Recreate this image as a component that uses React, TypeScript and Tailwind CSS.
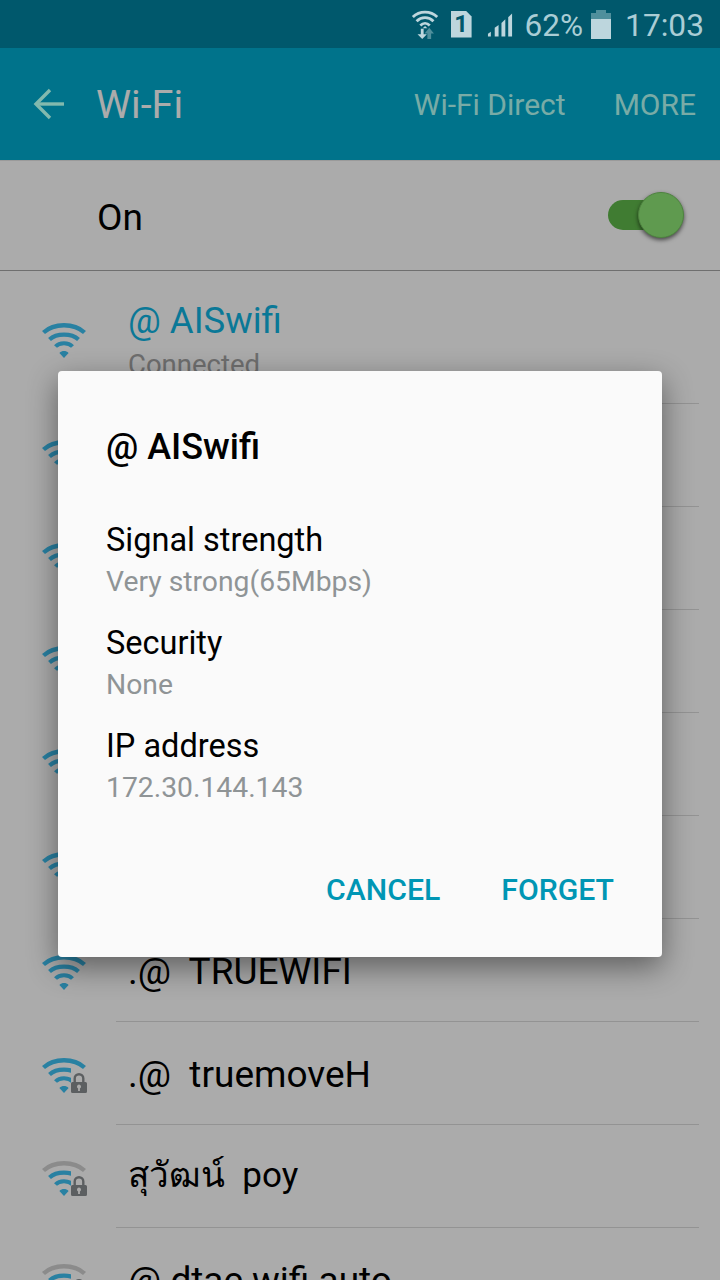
function WifiIcon({ weak, lock }: { weak?: boolean; lock?: boolean }) {
  const blue = '#3ec0f2';
  return (
    <svg width="48" height="38" viewBox="0 0 48 38" fill="none" className="shrink-0">
      <defs>
        <clipPath id="lock-cut">
          <rect x="0" y="0" width="31" height="38" />
        </clipPath>
      </defs>
      <path d="M3.5 12.5C14 2.8 34 2.8 44.5 12.5" stroke={weak ? '#d0d0d0' : blue} strokeWidth="4.4" />
      <g clipPath={lock ? 'url(#lock-cut)' : undefined}>
        <path d="M9.5 19.5C16.5 13 31.5 13 38.5 19.5" stroke={blue} strokeWidth="4.2" />
        <path d="M15.5 26.5C19.5 22.2 28.5 22.2 32.5 26.5" stroke={blue} strokeWidth="4" />
      </g>
      <path d="M24 38l-4.6-5c2.6-2.6 6.6-2.6 9.2 0L24 38Z" fill={blue} />
      {lock && (
        <path
          d="M33.5 27v-3.5a5.5 5.5 0 0 1 11 0V27h1a1.5 1.5 0 0 1 1.5 1.5v8a1.5 1.5 0 0 1-1.5 1.5h-13a1.5 1.5 0 0 1-1.5-1.5v-8a1.5 1.5 0 0 1 1.5-1.5h1Zm2.4 0h6.2v-3.5a3.1 3.1 0 0 0-6.2 0V27Zm3.1 2.6a2 2 0 0 0-.9 3.8V36h1.8v-2.6a2 2 0 0 0-.9-3.8Z"
          fill="#8a8e91"
          fillRule="evenodd"
        />
      )}
    </svg>
  );
}

function WifiRow({ name, weak, lock, thai }: { name?: string; weak?: boolean; lock?: boolean; thai?: boolean }) {
  return (
    <div className="h-[103px] shrink-0 flex items-center pl-[40px] pr-[21px]">
      <WifiIcon weak={weak} lock={lock} />
      <div className="ml-[40px] flex-1 self-stretch relative flex items-center">
        <span className={thai ? 'text-[35px] text-black whitespace-pre' : 'mt-[3px] text-[37px] text-black whitespace-pre'}>{name}</span>
        <div className="absolute -left-[12px] right-0 bottom-0 h-px bg-[#dcdcdc]" />
      </div>
    </div>
  );
}

function StatusIcons() {
  return (
    <div className="flex items-center">
      {/* wifi with up/down arrows */}
      <svg width="29" height="30" viewBox="0 0 30 32" fill="none">
        <path d="M1.5 8.5C8.5 1.5 20.5 1.5 27.5 8.5" stroke="#bdd6dd" strokeWidth="3" />
        <path d="M5.5 13C10.5 8 18.5 8 23.5 13" stroke="#bdd6dd" strokeWidth="3" />
        <path d="M9.5 17.5C12.5 14.5 16.5 14.5 19.5 17.5" stroke="#bdd6dd" strokeWidth="3" />
        <path d="M12 20.5h5l-2.5-2.5Z" fill="#bdd6dd" />
        <path d="M10 21v6H6.5l5 5 5-5H13v-6Z" fill="#bdd6dd" />
        <path d="M17 32v-6h-3l5-6 5 6h-3v6Z" fill="#4f8f9c" />
      </svg>
      {/* sim slot 1 */}
      <div className="ml-[11px] w-[21px] h-[27px] bg-[#bdd6dd] flex items-center justify-center [clip-path:polygon(0_0,72%_0,100%_22%,100%_100%,0_100%)]">
        <span className="text-[24px] leading-none font-bold text-[#00586c]">1</span>
      </div>
      {/* signal bars */}
      <svg width="27" height="26" viewBox="0 0 28 26" className="ml-[15px]">
        <path d="M1 26v-3l3-2v5Z" fill="#bdd6dd" />
        <path d="M8 26v-9l4-3v12Z" fill="#bdd6dd" />
        <path d="M15 26V12l4-4v18Z" fill="#bdd6dd" />
        <path d="M22 26V6l4-4v24Z" fill="#bdd6dd" />
      </svg>
    </div>
  );
}

function Info({ label, value }: { label: string; value: string }) {
  return (
    <div className="h-[103px]">
      <div className="text-[32.5px] leading-[42px] text-black">{label}</div>
      <div className="text-[28.3px] leading-[41px] text-[#8f9496]">{value}</div>
    </div>
  );
}

export default function App() {
  return (
    <div className="relative w-[720px] h-[1280px] overflow-hidden bg-white font-['Roboto',sans-serif]">
      {/* status bar */}
      <div className="h-[48px] bg-[#00586c] flex items-center justify-end pr-[16px] text-[#aacdd5]">
        <StatusIcons />
        <span className="ml-[11px] mt-[3px] text-[31.5px] leading-none">62%</span>
        <div className="ml-[8px] w-[20px] h-[29px] flex flex-col items-center">
          <div className="w-[10px] h-[3px] bg-[#4f8f9c]" />
          <div className="w-full h-[6px] bg-[#4f8f9c]" />
          <div className="w-full flex-1 bg-[#bdd6dd]" />
        </div>
        <span className="ml-[14px] mt-[3px] text-[31.7px] leading-none">17:03</span>
      </div>

      {/* app bar */}
      <div className="h-[112px] bg-[#00acd0] flex items-center">
        <svg width="32" height="32" viewBox="0 0 32 32" fill="none" className="ml-[33px] relative z-10" stroke="#82b9ae" strokeWidth="3.4">
          <path d="M31 16H3" />
          <path d="M17 2 3 16l14 14" />
        </svg>
        <span className="ml-[31px] text-[39.5px] text-white relative top-[1px]">Wi-Fi</span>
        <span className="ml-auto text-[30px] text-[#b5fff8]">Wi-Fi Direct</span>
        <span className="ml-[48px] mr-[24px] text-[30px] text-[#b5fff8]">MORE</span>
      </div>

      {/* on/off row */}
      <div className="h-[111px] bg-white flex items-center border-t border-t-[#e6e6e6] border-b border-b-[#a6a6a6] relative">
        <span className="ml-[97px] mt-[5px] text-[37px] text-black">On</span>
        <div className="absolute left-[608px] top-[39px] w-[60px] h-[30px] rounded-full bg-[#60b94b]" />
        <div className="absolute left-[638px] top-[31px] w-[46px] h-[46px] rounded-full bg-[#8ee677] border border-[#74c45e] shadow-[0_2px_4px_rgba(0,0,0,0.6)]" />
      </div>

      {/* wifi list */}
      <div className="bg-white">
        <div className="h-[133px] flex pl-[40px] pr-[21px]">
          <div className="pt-[49px]">
            <WifiIcon />
          </div>
          <div className="ml-[40px] flex-1 relative pt-[25px]">
            <div className="text-[36.5px] leading-[50px] text-[#10b4e2]">@ AISwifi</div>
            <div className="text-[27.5px] leading-[37px] text-[#a5a5a5]">Connected</div>
            <div className="absolute -left-[12px] right-0 bottom-0 h-px bg-[#dcdcdc]" />
          </div>
        </div>
        <WifiRow />
        <WifiRow />
        <WifiRow />
        <WifiRow />
        <WifiRow />
        <WifiRow name=".@  TRUEWIFI" />
        <WifiRow name=".@  truemoveH" lock />
        <WifiRow name="สุวัฒน์  poy" weak lock thai />
        <WifiRow name="@ dtac wifi auto" weak lock />
      </div>

      {/* scrim, the status bar stays undimmed */}
      <div className="absolute inset-x-0 top-[48px] bottom-0 bg-black/33" />

      {/* dialog */}
      <div className="absolute left-[58px] top-[371px] w-[604px] h-[586px] bg-[#fafafa] rounded-[4px] shadow-[0_10px_30px_rgba(0,0,0,0.45)] pl-[48px] pr-[48px] pt-[53px]">
        <div className="text-[36px] leading-[46px] font-medium text-black">@ AISwifi</div>
        <div className="mt-[49px]">
          <Info label="Signal strength" value="Very strong(65Mbps)" />
          <Info label="Security" value="None" />
          <Info label="IP address" value="172.30.144.143" />
        </div>
        <div className="mt-[39px] flex justify-end gap-[61px] text-[30.2px] font-medium text-[#0096b4]">
          <span>CANCEL</span>
          <span>FORGET</span>
        </div>
      </div>
    </div>
  );
}
